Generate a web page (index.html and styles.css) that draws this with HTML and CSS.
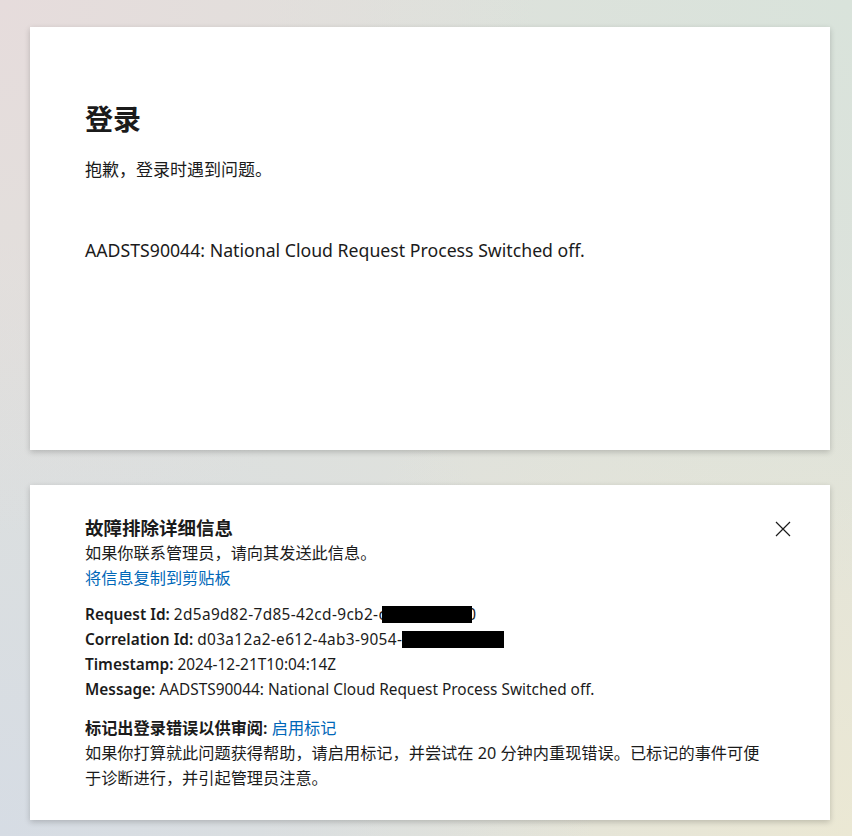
FILE: index.html
```html
<!DOCTYPE html>
<html lang="zh-CN">
<head>
  <meta charset="UTF-8" />
  <title>登录</title>
  <link rel="stylesheet" href="styles.css">
</head>
<body>
<div class="page">
  <div class="card main-card">
    <h1 class="title">登录</h1>
    <p class="subtitle">抱歉，登录时遇到问题。</p>
    <p class="error-text">AADSTS90044: National Cloud Request Process Switched off.</p>
  </div>

  <div class="card debug-card">
    <button class="close-btn" aria-label="关闭">
      <svg width="16" height="16" viewBox="0 0 16 16"><path d="M1 1 L15 15 M15 1 L1 15" stroke="#1b1b1b" stroke-width="1.2" fill="none"/></svg>
    </button>
    <h2 class="debug-title">故障排除详细信息</h2>
    <p class="line cjk">如果你联系管理员，请向其发送此信息。</p>
    <p class="line cjk"><a href="#" class="link">将信息复制到剪贴板</a></p>
    <div class="details">
      <p class="line"><b>Request Id:</b> <span class="id-value">2d5a9d82-7d85-42cd-9cb2-c</span><span class="redact redact-req"></span>0</p>
      <p class="line"><b>Correlation Id:</b> <span class="id-value">d03a12a2-e612-4ab3-9054-</span><span class="redact redact-corr"></span></p>
      <p class="line"><b>Timestamp:</b> 2024-12-21T10:04:14Z</p>
      <p class="line"><b>Message:</b> AADSTS90044: National Cloud Request Process Switched off.</p>
    </div>
    <div class="flag">
      <p class="line cjk"><b>标记出登录错误以供审阅:</b> <a href="#" class="link">启用标记</a></p>
      <p class="line cjk">如果你打算就此问题获得帮助，请启用标记，并尝试在 20 分钟内重现错误。已标记的事件可便于诊断进行，并引起管理员注意。</p>
    </div>
  </div>
</div>
</body>
</html>
```

FILE: styles.css
```css
html, body {
  height: 100%;
}
body {
  margin: 0;
  font-family: "Segoe UI", "Noto Sans", "Noto Sans CJK SC", sans-serif;
  color: #1b1b1b;
  background:
    radial-gradient(circle at 0% 0%, #e6dcdc 0%, rgba(230,220,220,0) 45%),
    radial-gradient(circle at 100% 0%, #d9e3db 0%, rgba(217,227,219,0) 50%),
    radial-gradient(circle at 0% 100%, #d6dce4 0%, rgba(214,220,228,0) 50%),
    radial-gradient(circle at 100% 100%, #ebe8d4 0%, rgba(235,232,212,0) 50%),
    #dfe1dc;
  overflow: hidden;
}
.page {
  padding-top: 27px;
  padding-left: 30px;
}
.card {
  width: 800px;
  background: #fff;
  box-shadow: 0 2px 6px rgba(0,0,0,0.2);
  box-sizing: border-box;
  padding: 0 55px;
}
.main-card {
  height: 423px;
  padding-top: 72px;
}
.title {
  font-size: 28px;
  font-weight: 700;
  line-height: 40px;
  margin: 0;
}
.subtitle {
  font-size: 17px;
  line-height: 24px;
  margin: 19px 0 0;
}
.error-text {
  font-size: 17.7px;
  line-height: 24px;
  margin: 56px 0 0;
}
.debug-card {
  position: relative;
  margin-top: 35px;
  height: 335px;
  padding-top: 30px;
}
.close-btn {
  position: absolute;
  top: 36px;
  right: 39px;
  border: none;
  background: none;
  padding: 0;
  cursor: pointer;
}
.close-btn svg {
  display: block;
}
.debug-title {
  font-size: 18.5px;
  font-weight: 700;
  line-height: 26px;
  margin: 0;
}
.line {
  font-size: 15.4px;
  line-height: 25px;
  margin: 0;
}
.line.cjk {
  font-size: 16.2px;
}
.line b {
  font-weight: 600;
}
.id-value {
  letter-spacing: 0.35px;
}
.link {
  color: #0067b8;
  text-decoration: none;
}
.details {
  margin-top: 11px;
}
.flag {
  margin-top: 14px;
}
.redact {
  display: inline-block;
  background: #000;
  height: 17px;
  vertical-align: -3px;
  position: relative;
}
.redact-req {
  width: 90px;
  margin-left: -4px;
  margin-right: -5px;
}
.redact-corr {
  width: 102px;
}
```
